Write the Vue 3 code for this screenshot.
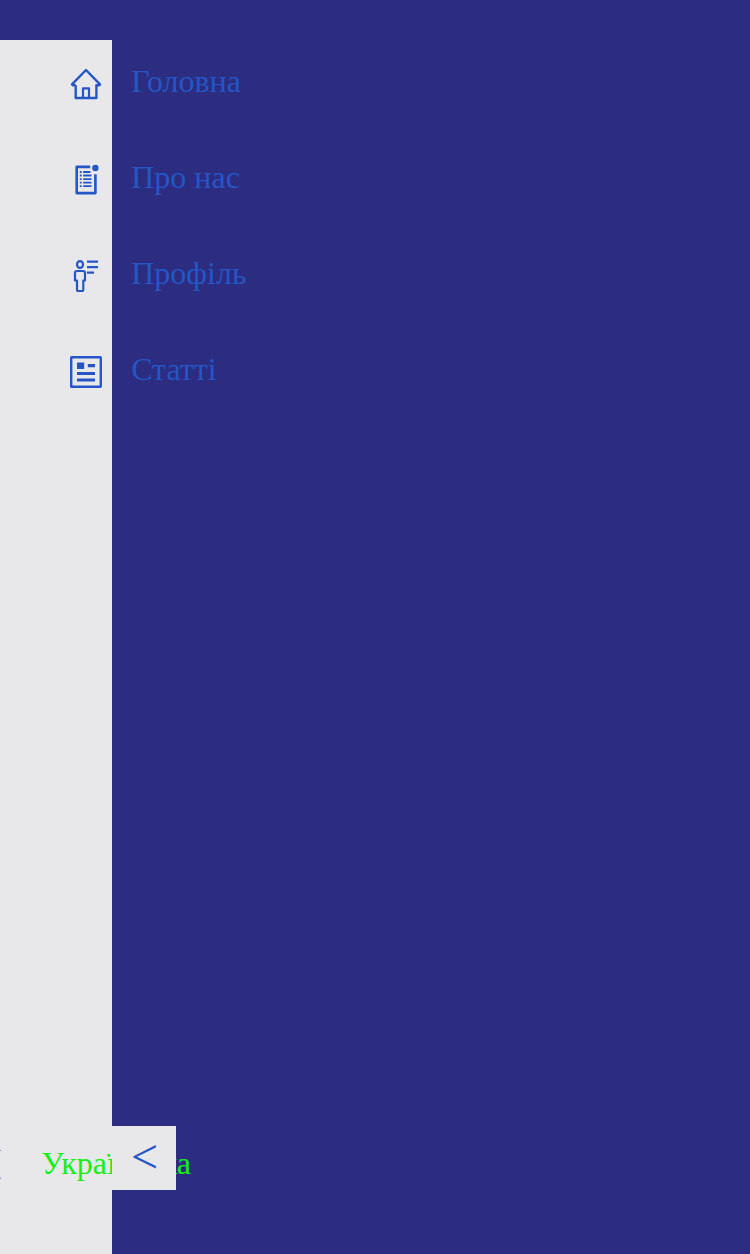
<script setup>
const items = [
  { id: 'home', label: 'Головна' },
  { id: 'about', label: 'Про нас' },
  { id: 'profile', label: 'Профіль' },
  { id: 'articles', label: 'Статті' },
]
</script>

<template>
  <div class="page">
    <aside class="sidebar">
      <nav class="menu">
        <a v-for="item in items" :key="item.id" class="item">
          <svg class="icon" viewBox="0 0 32 32" fill="none" stroke="currentColor" stroke-width="2">
            <g v-if="item.id === 'home'" stroke-width="2.4">
              <path d="M5.7 17.3H3L2 16.3L16 2L30 16.3L29 17.3H26.4V30H5.7V17.3" stroke-linejoin="round" />
              <path d="M13 30V20.3H19V30" stroke-width="2.2" stroke-linejoin="round" />
            </g>
            <g v-else-if="item.id === 'about'">
              <path d="M20.2 2.9H6.7V29.1H25.4V10.3" stroke-width="2.6" stroke-linejoin="round" />
              <circle cx="25.4" cy="4" r="3.2" fill="currentColor" stroke="none" />
              <path d="M9.8 8H11.7M13.2 8H20.5M9.8 11.5H11.7M13.2 11.5H21.5M9.8 15.1H11.7M13.2 15.1H21.5M9.8 18.7H11.7M13.2 18.7H21.5M9.8 22.2H11.7M13.2 22.2H21.5" stroke-width="1.8" />
            </g>
            <g v-else-if="item.id === 'profile'" stroke-width="2.2">
              <ellipse cx="10" cy="4.5" rx="3" ry="3.4" />
              <path d="M7 11H13Q15 11 15 13V20.5H13.3V29.7Q13.3 31 12 31H8.2Q7 31 7 29.7V20.5H5V13Q5 11 7 11Z" stroke-linejoin="round" />
              <path d="M17 1.7H28M17 7.2H28M17 12.7H24" />
            </g>
            <g v-else>
              <rect x="1.2" y="1.2" width="29.6" height="29.6" rx="0.5" stroke-width="2.4" />
              <path d="M7 6.5H14.2V13H7Z" fill="currentColor" stroke="none" />
              <path d="M17.8 9.6H25M7 17.5H25M7 24H25" stroke-width="3.1" />
            </g>
          </svg>
          <span class="label">{{ item.label }}</span>
        </a>
      </nav>
      <div class="footer">
        <span class="edge"></span>
        <span class="language">Українська</span>
      </div>
      <button class="toggle" type="button">&lt;</button>
    </aside>
  </div>
</template>

<style>
body {
  margin: 0;
  background: #2c2c80;
}
</style>

<style scoped>
.page {
  box-sizing: border-box;
  height: 1254px;
  padding-top: 40px;
  overflow: hidden;
  background: #2c2c80;
  font-family: "Liberation Serif", serif;
  font-size: 32px;
  color: #2456c5;
}
.sidebar {
  position: relative;
  display: flex;
  flex-direction: column;
  justify-content: space-between;
  width: 112px;
  height: 1214px;
  background: #e8e8ea;
}
.menu {
  display: flex;
  flex-direction: column;
  gap: 64px;
  padding: 28px 0 0 70px;
}
.item {
  display: flex;
  gap: 29.2px;
  height: 32px;
}
.icon {
  flex: none;
  width: 32px;
  height: 32px;
}
.label {
  line-height: 36px;
  margin-top: -5px;
  white-space: nowrap;
}
.footer {
  display: flex;
  gap: 40.3px;
  height: 109px;
}
.edge {
  flex: none;
  box-sizing: border-box;
  width: 1px;
  height: 29px;
  margin-top: 5px;
  border-top: 1px solid #6f91d6;
  border-bottom: 2px solid #9eb4e0;
}
.language {
  line-height: 36px;
  color: #18ee18;
  white-space: nowrap;
}
.toggle {
  position: absolute;
  left: 112px;
  bottom: 64px;
  width: 64px;
  height: 64px;
  padding: 0 0 3px 1px;
  border: 0;
  background: #e8e8ea;
  color: #2456c5;
  font: 48px/60px "Liberation Serif", serif;
}
</style>
